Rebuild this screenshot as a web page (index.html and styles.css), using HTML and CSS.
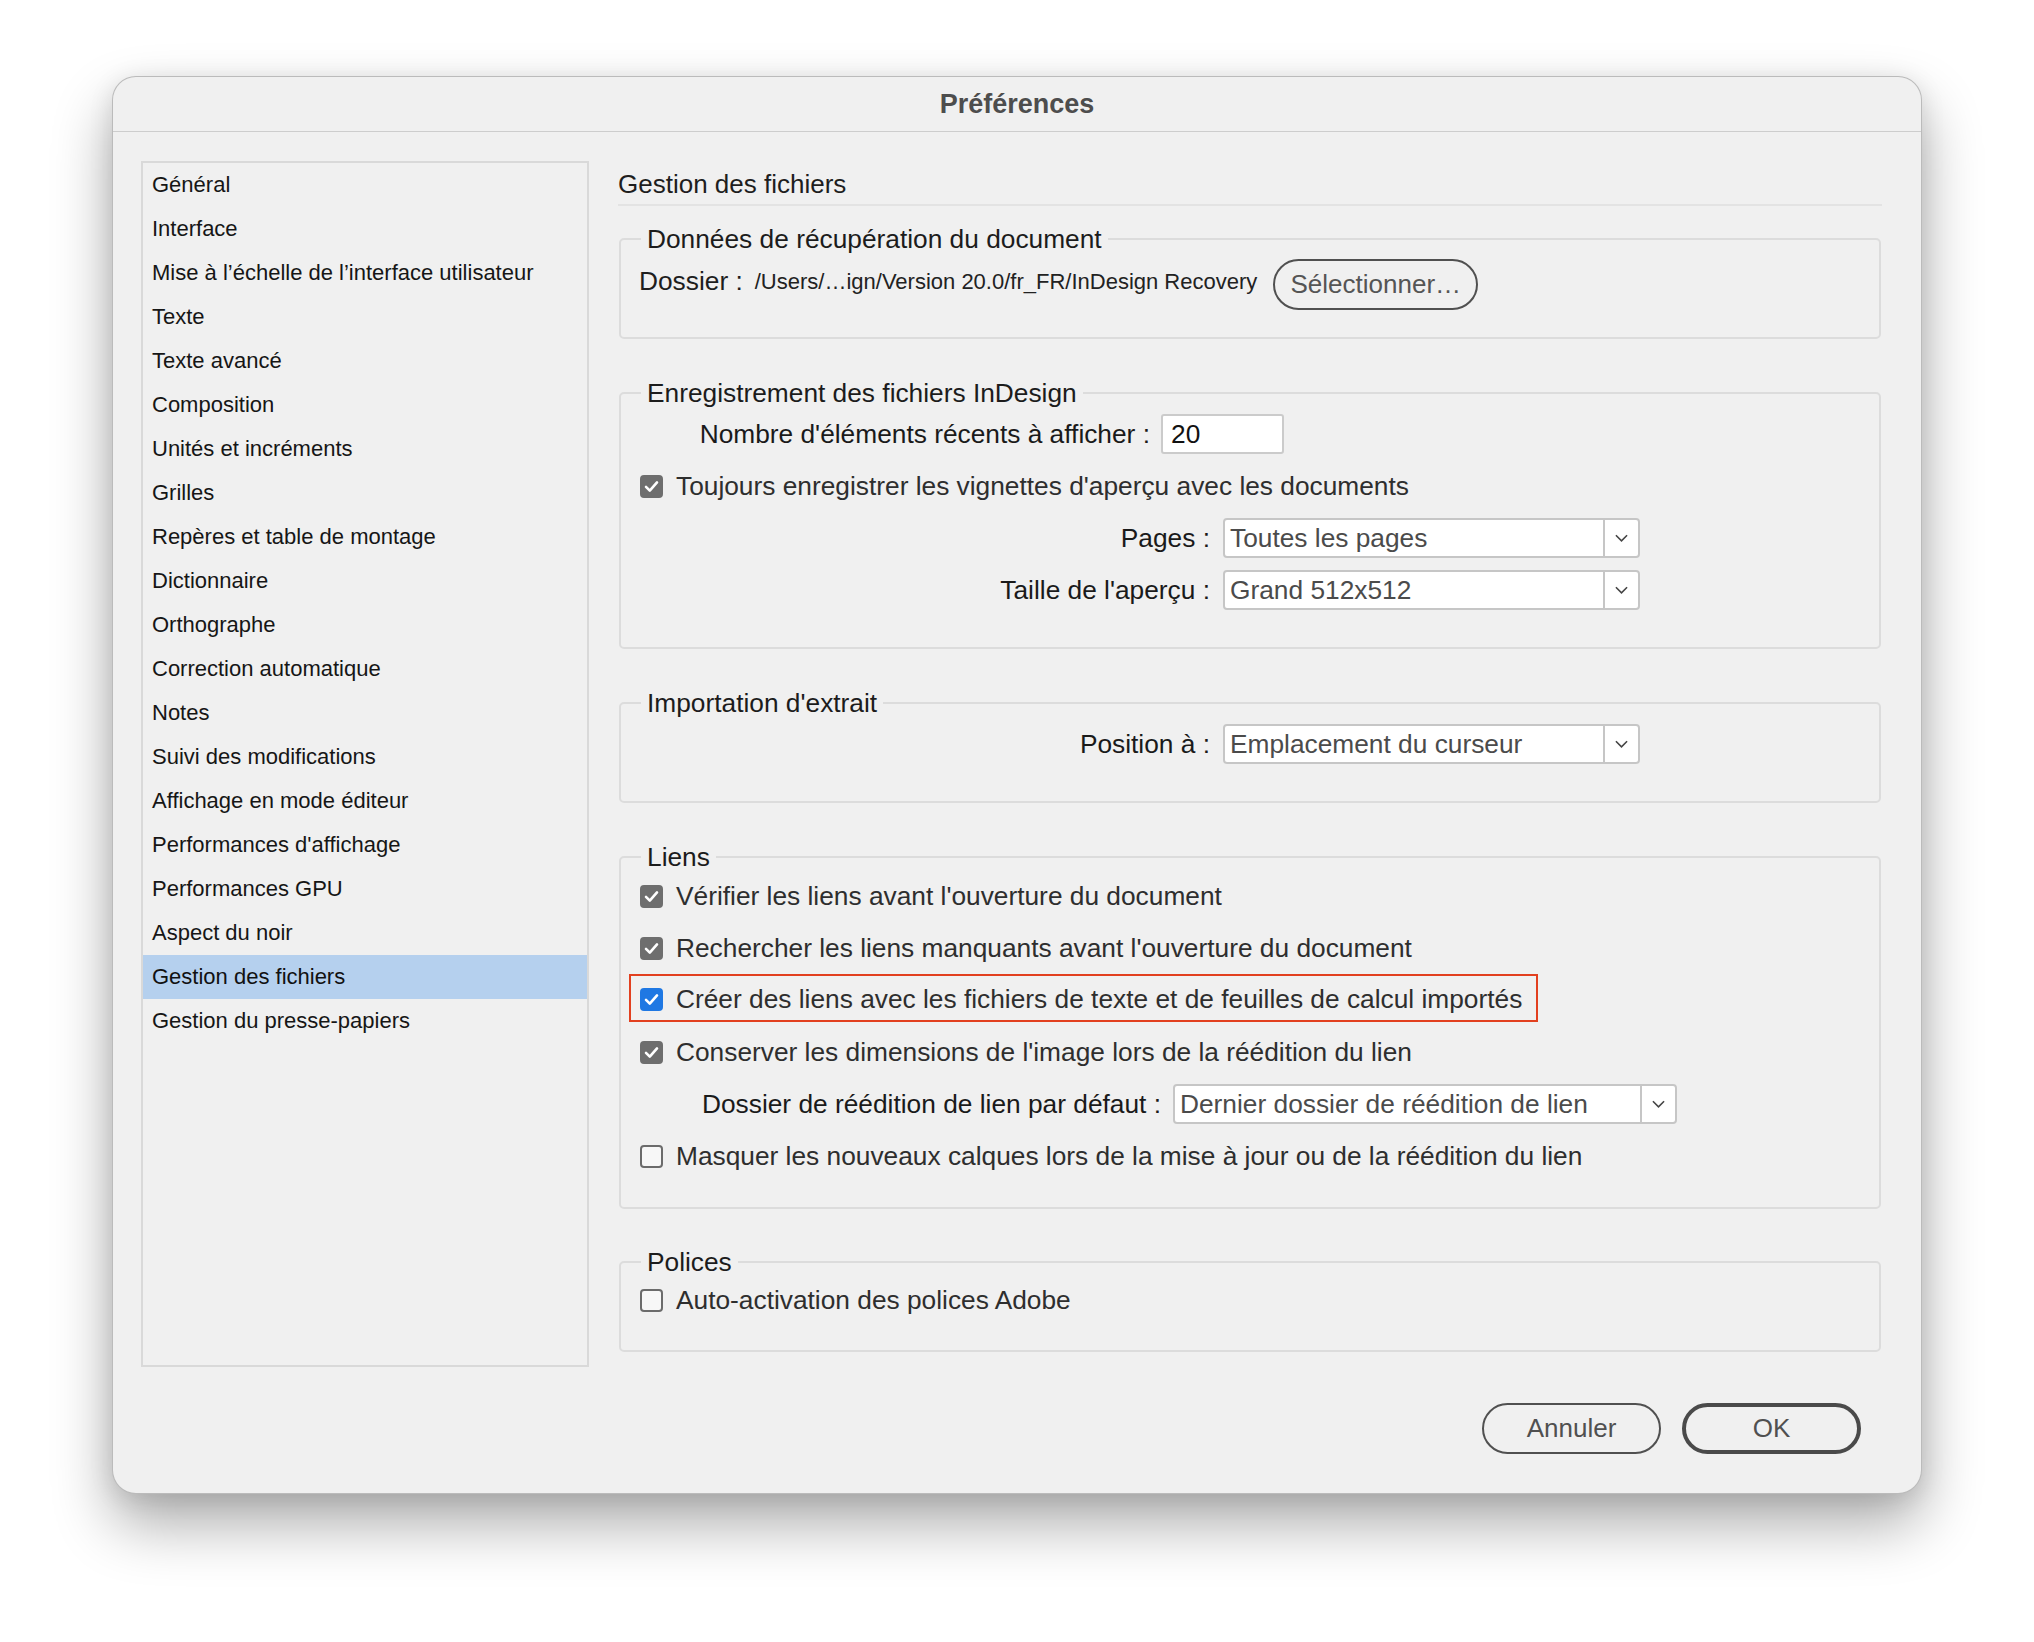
FILE: index.html
```html
<!DOCTYPE html>
<html lang="fr">
<head>
<meta charset="utf-8">
<title>Préférences</title>
<link rel="stylesheet" href="styles.css">
</head>
<body>
<div class="window">
  <div class="titlebar">Préférences</div>
  <div class="body">
    <div class="main">
      <ul class="sidebar">
        <li>Général</li>
        <li>Interface</li>
        <li>Mise à l’échelle de l’interface utilisateur</li>
        <li>Texte</li>
        <li>Texte avancé</li>
        <li>Composition</li>
        <li>Unités et incréments</li>
        <li>Grilles</li>
        <li>Repères et table de montage</li>
        <li>Dictionnaire</li>
        <li>Orthographe</li>
        <li>Correction automatique</li>
        <li>Notes</li>
        <li>Suivi des modifications</li>
        <li>Affichage en mode éditeur</li>
        <li>Performances d'affichage</li>
        <li>Performances GPU</li>
        <li>Aspect du noir</li>
        <li class="selected">Gestion des fichiers</li>
        <li>Gestion du presse-papiers</li>
      </ul>
      <div class="content">
        <h2 class="section-title">Gestion des fichiers</h2>

        <fieldset class="group group-recovery">
          <legend>Données de récupération du document</legend>
          <div class="row row-folder">
            <span class="folder-label">Dossier :</span>
            <span class="path">/Users/…ign/Version 20.0/fr_FR/InDesign Recovery</span>
            <button class="pill">Sélectionner…</button>
          </div>
        </fieldset>

        <fieldset class="group group-save">
          <legend>Enregistrement des fichiers InDesign</legend>
          <div class="row">
            <span class="lbl lbl-recent">Nombre d'éléments récents à afficher :</span>
            <span class="textfield">20</span>
          </div>
          <div class="row">
            <span class="check checked"><svg viewBox="0 0 23 23"><path d="M6 11.8 L9.8 15.6 L17 7.4"/></svg></span>
            <span class="cb-text">Toujours enregistrer les vignettes d'aperçu avec les documents</span>
          </div>
          <div class="row">
            <span class="lbl lbl-wide">Pages :</span>
            <span class="select select-mid"><span class="select-value">Toutes les pages</span><span class="select-arrow"><svg viewBox="0 0 14 8"><path d="M1 1 L7 7 L13 1"/></svg></span></span>
          </div>
          <div class="row">
            <span class="lbl lbl-wide">Taille de l'aperçu :</span>
            <span class="select select-mid"><span class="select-value">Grand 512x512</span><span class="select-arrow"><svg viewBox="0 0 14 8"><path d="M1 1 L7 7 L13 1"/></svg></span></span>
          </div>
        </fieldset>

        <fieldset class="group group-snippet">
          <legend>Importation d'extrait</legend>
          <div class="row">
            <span class="lbl lbl-wide">Position à :</span>
            <span class="select select-mid"><span class="select-value">Emplacement du curseur</span><span class="select-arrow"><svg viewBox="0 0 14 8"><path d="M1 1 L7 7 L13 1"/></svg></span></span>
          </div>
        </fieldset>

        <fieldset class="group group-links">
          <legend>Liens</legend>
          <div class="row row-first">
            <span class="check checked"><svg viewBox="0 0 23 23"><path d="M6 11.8 L9.8 15.6 L17 7.4"/></svg></span>
            <span class="cb-text">Vérifier les liens avant l'ouverture du document</span>
          </div>
          <div class="row">
            <span class="check checked"><svg viewBox="0 0 23 23"><path d="M6 11.8 L9.8 15.6 L17 7.4"/></svg></span>
            <span class="cb-text">Rechercher les liens manquants avant l'ouverture du document</span>
          </div>
          <div class="row">
            <span class="highlight">
              <span class="check checked active"><svg viewBox="0 0 23 23"><path d="M6 11.8 L9.8 15.6 L17 7.4"/></svg></span>
              <span class="cb-text">Créer des liens avec les fichiers de texte et de feuilles de calcul importés</span>
            </span>
          </div>
          <div class="row">
            <span class="check checked"><svg viewBox="0 0 23 23"><path d="M6 11.8 L9.8 15.6 L17 7.4"/></svg></span>
            <span class="cb-text">Conserver les dimensions de l'image lors de la réédition du lien</span>
          </div>
          <div class="row">
            <span class="lbl lbl-relink">Dossier de réédition de lien par défaut :</span>
            <span class="select select-long"><span class="select-value">Dernier dossier de réédition de lien</span><span class="select-arrow"><svg viewBox="0 0 14 8"><path d="M1 1 L7 7 L13 1"/></svg></span></span>
          </div>
          <div class="row">
            <span class="check"></span>
            <span class="cb-text">Masquer les nouveaux calques lors de la mise à jour ou de la réédition du lien</span>
          </div>
        </fieldset>

        <fieldset class="group group-fonts">
          <legend>Polices</legend>
          <div class="row row-font">
            <span class="check"></span>
            <span class="cb-text">Auto-activation des polices Adobe</span>
          </div>
        </fieldset>
      </div>
    </div>
    <div class="footer">
      <button class="btn">Annuler</button>
      <button class="btn btn-default">OK</button>
    </div>
  </div>
</div>
</body>
</html>
```

FILE: styles.css
```css
* {
  box-sizing: border-box;
}

html, body {
  margin: 0;
  padding: 0;
  background: #ffffff;
}

body {
  font-family: "Liberation Sans", Arial, sans-serif;
  color: #2b2b2b;
  padding: 76px 0 0 112px;
  height: 1642px;
  overflow: hidden;
}

.window {
  width: 1810px;
  height: 1418px;
  background: #f0f0f0;
  border: 1px solid rgba(0, 0, 0, 0.22);
  border-radius: 24px;
  box-shadow: 0 30px 60px rgba(0, 0, 0, 0.33), 0 4px 24px rgba(0, 0, 0, 0.10);
  display: flex;
  flex-direction: column;
}

.titlebar {
  height: 55px;
  border-bottom: 1px solid #cdcdcd;
  text-align: center;
  font-weight: bold;
  font-size: 27px;
  line-height: 54px;
  color: #4d4d4d;
}

.body {
  padding: 29px 39px 40px 28px;
  display: flex;
  flex-direction: column;
}

.main {
  display: flex;
  align-items: flex-start;
}

/* Sidebar */
.sidebar {
  list-style: none;
  margin: 0;
  padding: 0;
  width: 448px;
  height: 1206px;
  border: 2px solid #d9d9d9;
  flex: none;
}

.sidebar li {
  height: 44px;
  line-height: 44px;
  font-size: 22px;
  padding-left: 9px;
  color: #161616;
  white-space: nowrap;
}

.sidebar li.selected {
  background: #b5d0ee;
  color: #111111;
}

/* Content */
.content {
  flex: 1;
  margin-left: 29px;
  min-width: 0;
}

.section-title {
  margin: 8px 0 0;
  font-size: 26px;
  line-height: 30px;
  font-weight: normal;
  color: #1e1e1e;
  padding-bottom: 5px;
  border-bottom: 2px solid #e3e3e3;
}

.group {
  margin: 39px 1px 0;
  padding: 0 0 31px;
  border: 2px solid #dcdcdc;
  border-radius: 5px;
  min-width: 0;
}

.group legend {
  margin-left: 20px;
  padding: 0 6px;
  font-size: 26.3px;
  line-height: 30px;
  color: #1c1c1c;
}

.group-recovery {
  margin-top: 18px;
  padding-bottom: 23px;
}

.group-links {
  padding-bottom: 25px;
}

.group-fonts {
  margin-top: 38px;
  padding-bottom: 26px;
}

.row {
  display: flex;
  align-items: center;
  height: 52px;
  font-size: 26.3px;
}

.group-links .row-first {
  margin-top: -2px;
}

.row-folder {
  height: 60px;
  padding-left: 18px;
}

.row-font {
  height: 47px;
}

.folder-label {
  color: #1e1e1e;
  margin-right: 12px;
  margin-bottom: 5px;
  white-space: nowrap;
}

.path {
  font-size: 22px;
  color: #222222;
  white-space: nowrap;
  margin-right: 16px;
  margin-bottom: 5px;
}

.pill {
  width: 205px;
  height: 51px;
  border: 2px solid #505050;
  border-radius: 26px;
  background: transparent;
  font-family: inherit;
  font-size: 26px;
  color: #555555;
  padding: 0;
}

.lbl {
  flex: none;
  text-align: right;
  color: #1a1a1a;
  white-space: nowrap;
}

.lbl-recent {
  width: 529px;
  margin-right: 11px;
}

.lbl-wide {
  width: 589px;
  margin-right: 13px;
}

.lbl-relink {
  width: 540px;
  margin-right: 12px;
}

.textfield {
  width: 123px;
  height: 40px;
  border: 2px solid #cbcbcb;
  border-radius: 3px;
  background: #ffffff;
  padding-left: 8px;
  line-height: 36px;
  color: #111111;
}

.select {
  display: flex;
  height: 40px;
  border: 2px solid #c6c6c6;
  border-radius: 4px;
  background: #ffffff;
}

.select-mid {
  width: 417px;
}

.select-long {
  width: 504px;
}

.select-value {
  flex: 1;
  padding-left: 5px;
  line-height: 36px;
  color: #4b4b4b;
  white-space: nowrap;
  overflow: hidden;
}

.select-arrow {
  width: 35px;
  border-left: 2px solid #c6c6c6;
  display: flex;
  align-items: center;
  justify-content: center;
}

.select-arrow svg {
  width: 13px;
  height: 8px;
  fill: none;
  stroke: #444444;
  stroke-width: 1.7;
}

.check {
  flex: none;
  width: 23px;
  height: 23px;
  margin-left: 19px;
  margin-right: 13px;
  border: 2px solid #6b6b6b;
  border-radius: 4px;
  background: #f7f7f7;
  display: flex;
  align-items: center;
  justify-content: center;
}

.check.checked {
  background: #6e6e6e;
  border-color: #6e6e6e;
}

.check.active {
  background: #1f78e3;
  border-color: #1f78e3;
}

.check svg {
  width: 23px;
  height: 23px;
  flex: none;
  fill: none;
  stroke: #ffffff;
  stroke-width: 2.6;
  stroke-linecap: round;
  stroke-linejoin: round;
}

.cb-text {
  color: #2e2e2e;
  white-space: nowrap;
}

.highlight {
  display: flex;
  align-items: center;
  height: 48px;
  margin-left: 8px;
  margin-top: -4px;
  padding: 2px 14px 0 0;
  border: 2px solid #e2401f;
}

.highlight .check {
  margin-left: 9px;
}

/* Footer */
.footer {
  display: flex;
  justify-content: flex-end;
  gap: 21px;
  margin-top: 36px;
  padding-right: 21px;
}

.btn {
  width: 179px;
  height: 51px;
  border: 2px solid #505050;
  border-radius: 26px;
  background: transparent;
  font-family: inherit;
  font-size: 26px;
  color: #505050;
  padding: 0;
}

.btn-default {
  border: 4px solid #4a4a4a;
}
```
